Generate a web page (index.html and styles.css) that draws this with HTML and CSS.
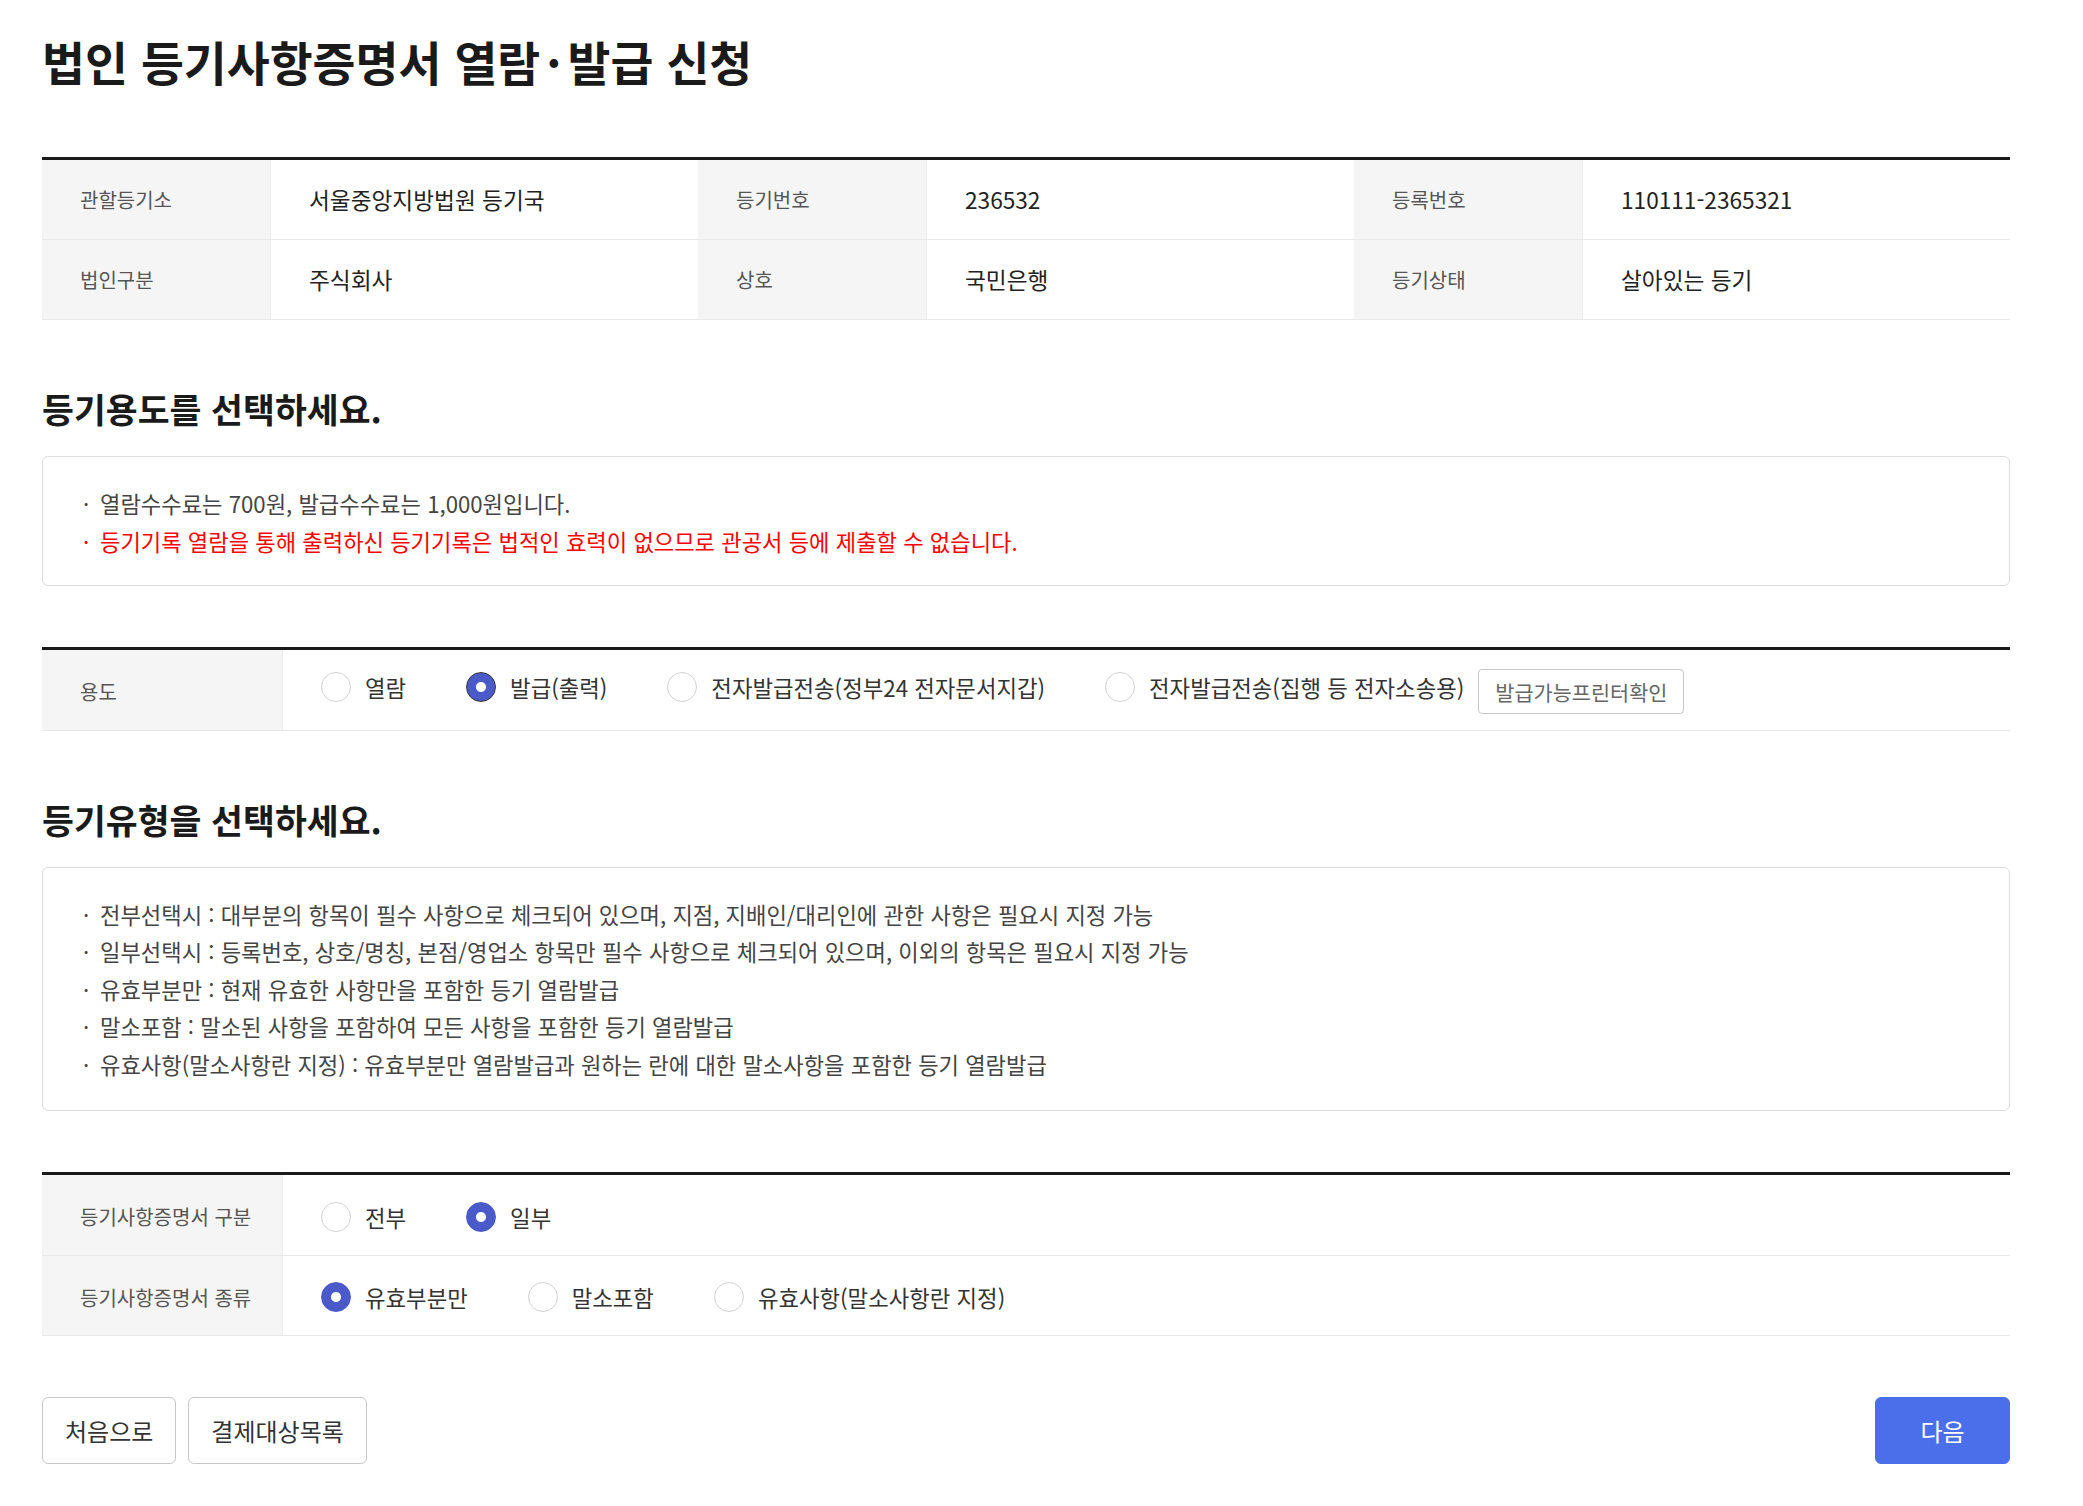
FILE: index.html
```
<!DOCTYPE html>
<html lang="ko">
<head>
    <meta charset="UTF-8">
    <title>법인 등기사항증명서 열람·발급 신청</title>
    <link rel="stylesheet" href="styles.css">
</head>
<body>
    <div class="wrap">
        <h1 class="title">법인 등기사항증명서 열람<span class="dot">·</span>발급 신청</h1>

        <div class="info-table">
            <div class="th">관할등기소</div>
            <div class="td">서울중앙지방법원 등기국</div>
            <div class="th">등기번호</div>
            <div class="td">236532</div>
            <div class="th">등록번호</div>
            <div class="td">110111-2365321</div>
            <div class="th">법인구분</div>
            <div class="td">주식회사</div>
            <div class="th">상호</div>
            <div class="td">국민은행</div>
            <div class="th">등기상태</div>
            <div class="td">살아있는 등기</div>
        </div>

        <h2 class="sub-title">등기용도를 선택하세요.</h2>
        <ul class="notice">
            <li>열람수수료는 700원, 발급수수료는 1,000원입니다.</li>
            <li class="red">등기기록 열람을 통해 출력하신 등기기록은 법적인 효력이 없으므로 관공서 등에 제출할 수 없습니다.</li>
        </ul>

        <div class="opt-table">
            <div class="opt-row">
                <div class="th">용도</div>
                <div class="cell up">
                    <label class="radio"><input type="radio" class="rd" name="use">열람</label>
                    <label class="radio"><input type="radio" class="rd focus" name="use" checked>발급(출력)</label>
                    <label class="radio"><input type="radio" class="rd" name="use">전자발급전송(정부24 전자문서지갑)</label>
                    <label class="radio last"><input type="radio" class="rd" name="use">전자발급전송(집행 등 전자소송용)</label>
                    <button class="btn-sm">발급가능프린터확인</button>
                </div>
            </div>
        </div>

        <h2 class="sub-title">등기유형을 선택하세요.</h2>
        <ul class="notice long">
            <li>전부선택시 : 대부분의 항목이 필수 사항으로 체크되어 있으며, 지점, 지배인/대리인에 관한 사항은 필요시 지정 가능</li>
            <li>일부선택시 : 등록번호, 상호/명칭, 본점/영업소 항목만 필수 사항으로 체크되어 있으며, 이외의 항목은 필요시 지정 가능</li>
            <li>유효부분만 : 현재 유효한 사항만을 포함한 등기 열람발급</li>
            <li>말소포함 : 말소된 사항을 포함하여 모든 사항을 포함한 등기 열람발급</li>
            <li>유효사항(말소사항란 지정) : 유효부분만 열람발급과 원하는 란에 대한 말소사항을 포함한 등기 열람발급</li>
        </ul>

        <div class="opt-table">
            <div class="opt-row">
                <div class="th">등기사항증명서 구분</div>
                <div class="cell">
                    <label class="radio"><input type="radio" class="rd" name="range">전부</label>
                    <label class="radio"><input type="radio" class="rd" name="range" checked>일부</label>
                </div>
            </div>
            <div class="opt-row">
                <div class="th">등기사항증명서 종류</div>
                <div class="cell">
                    <label class="radio"><input type="radio" class="rd" name="kind" checked>유효부분만</label>
                    <label class="radio"><input type="radio" class="rd" name="kind">말소포함</label>
                    <label class="radio"><input type="radio" class="rd" name="kind">유효사항(말소사항란 지정)</label>
                </div>
            </div>
        </div>

        <div class="btns">
            <div class="left">
                <button class="btn">처음으로</button>
                <button class="btn">결제대상목록</button>
            </div>
            <button class="btn next">다음</button>
        </div>
    </div>
</body>
</html>
```
FILE: styles.css
```
*{
    margin:0;
    padding:0;
    box-sizing:border-box;
}
body{
    font-family:"Noto Sans CJK KR","Noto Sans",sans-serif;
    color:#222;
    background:#fff;
}
.wrap{
    width:1968px;
    margin-left:42px;
    padding:31px 0 44px;
}
.title{
    font-size:46.67px;
    font-weight:700;
    line-height:60px;
    color:#1a1a1a;
    margin-bottom:66px;
}
.title .dot{
    margin:0 6px;
}

/* 상단 정보 테이블 */
.info-table{
    display:grid;
    grid-template-columns:229px 1fr 229px 1fr 229px 1fr;
    border-top:3px solid #1a1a1a;
}
.th{
    display:flex;
    align-items:center;
    padding-left:38px;
    background:#f5f5f5;
    font-size:20px;
    color:#555;
    border-right:1px solid #ececec;
}
.info-table .th,.info-table .td{
    height:80px;
    border-bottom:1px solid #e8e8e8;
}
.td{
    display:flex;
    align-items:center;
    padding-left:38px;
    font-size:22.67px;
    color:#222;
}

.sub-title{
    font-size:34.67px;
    font-weight:700;
    line-height:44px;
    color:#1a1a1a;
    margin:66px 0 26px;
}

/* 안내 박스 */
.notice{
    list-style:none;
    border:1px solid #dcdcdc;
    border-radius:6px;
    padding:28px 40px 25px;
}
.notice.long{
    padding-bottom:27px;
}
.notice li{
    display:flex;
    font-size:22.2px;
    line-height:37.5px;
    color:#444;
}
.notice li::before{
    content:"·";
    flex:0 0 17px;
}
.notice .red{
    color:#ff0000;
}

/* 선택 테이블 */
.opt-table{
    border-top:3px solid #1a1a1a;
    margin-top:61px;
}
.opt-row{
    display:grid;
    grid-template-columns:241px 1fr;
    height:80.5px;
    border-bottom:1px solid #e8e8e8;
}
.opt-row .th,.cell{
    padding-top:4px;
}
.cell{
    display:flex;
    align-items:center;
    padding-left:38px;
}
.cell.up .radio{
    margin-bottom:10px;
}
.radio{
    display:flex;
    align-items:center;
    margin-right:60px;
    font-size:22.33px;
    color:#333;
    cursor:pointer;
}
.radio.last{
    margin-right:14px;
}
.rd{
    appearance:none;
    -webkit-appearance:none;
    width:30px;
    height:30px;
    border-radius:50%;
    border:1.5px solid #d2d2d2;
    background:#fff;
    margin:0 14px 0 0;
    outline:none;
}
.rd:checked{
    border-color:#4a5bc9;
    background:radial-gradient(circle,#fff 0 4.5px,#4a5bc9 5.5px);
}
.rd.focus:checked{
    border-color:#333;
}
.btn-sm{
    height:45px;
    padding:0 16px;
    border:1px solid #c8c8c8;
    border-radius:4px;
    background:#fff;
    font-family:inherit;
    font-size:20.8px;
    color:#666;
}

/* 하단 버튼 */
.btns{
    display:flex;
    justify-content:space-between;
    margin-top:61px;
}
.btns .left{
    display:flex;
    gap:12px;
}
.btn{
    height:67px;
    padding:0 22px;
    border:1px solid #c8c8c8;
    border-radius:6px;
    background:#fff;
    font-family:inherit;
    font-size:24px;
    color:#333;
}
.btn.next{
    width:135px;
    border-color:#4b6fea;
    background:#4b6fea;
    color:#fff;
}
```
